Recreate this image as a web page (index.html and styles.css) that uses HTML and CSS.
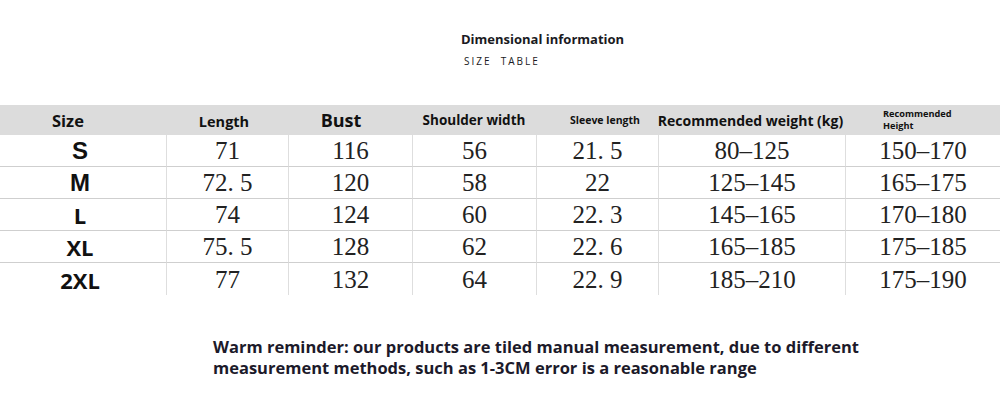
FILE: index.html
```html
<!DOCTYPE html>
<html lang="en">
<head>
<meta charset="utf-8">
<title>Size table</title>
<link rel="stylesheet" href="styles.css">
</head>
<body>
<div class="page">
  <div class="title-block">
    <div class="title">Dimensional information</div>
    <div class="subtitle">SIZE&nbsp;&nbsp;TABLE</div>
  </div>
  <div class="table">
    <div class="th th-size">Size</div>
    <div class="th th-len">Length</div>
    <div class="th th-bust">Bust</div>
    <div class="th th-sh">Shoulder width</div>
    <div class="th th-sl">Sleeve length</div>
    <div class="th th-wt">Recommended weight (kg)</div>
    <div class="th th-ht">Recommended<br>Height</div>

    <div class="td sz cond">S</div>
    <div class="td">71</div>
    <div class="td">116</div>
    <div class="td">56</div>
    <div class="td">21. 5</div>
    <div class="td">80–125</div>
    <div class="td">150–170</div>

    <div class="td sz cond">M</div>
    <div class="td">72. 5</div>
    <div class="td">120</div>
    <div class="td">58</div>
    <div class="td">22</div>
    <div class="td">125–145</div>
    <div class="td">165–175</div>

    <div class="td sz">L</div>
    <div class="td">74</div>
    <div class="td">124</div>
    <div class="td">60</div>
    <div class="td">22. 3</div>
    <div class="td">145–165</div>
    <div class="td">170–180</div>

    <div class="td sz">XL</div>
    <div class="td">75. 5</div>
    <div class="td">128</div>
    <div class="td">62</div>
    <div class="td">22. 6</div>
    <div class="td">165–185</div>
    <div class="td">175–185</div>

    <div class="td sz last">2XL</div>
    <div class="td last">77</div>
    <div class="td last">132</div>
    <div class="td last">64</div>
    <div class="td last">22. 9</div>
    <div class="td last">185–210</div>
    <div class="td last">175–190</div>
  </div>
  <div class="note">
    Warm reminder: our products are tiled manual measurement, due to different<br>
    measurement methods, such as 1-3CM error is a reasonable range
  </div>
</div>
</body>
</html>
```
FILE: styles.css
```css
html, body {
  margin: 0;
  padding: 0;
  background: #ffffff;
}

.page {
  width: 1000px;
  height: 415px;
  overflow: hidden;
  font-family: "Open Sans", "Noto Sans", sans-serif;
  color: #151515;
}

.title-block {
  padding: 30px 0 0 461px;
  height: 105px;
  box-sizing: border-box;
}

.title {
  font-size: 13px;
  font-weight: 700;
  line-height: 18px;
  color: #1a1a22;
}

.subtitle {
  margin: 6px 0 0 3px;
  font-size: 10px;
  letter-spacing: 2px;
  line-height: 14px;
  color: #1a1a22;
}

.table {
  display: grid;
  grid-template-columns: 166px 122px 124px 124px 122px 187px 155px;
  grid-template-rows: 30px repeat(5, 32px);
}

.th {
  background: #dcdcdc;
  font-weight: 700;
  display: flex;
  align-items: center;
  justify-content: center;
  color: #111;
  white-space: nowrap;
}

.th-size { font-size: 16.5px; justify-content: flex-start; padding-left: 52px; }
.th-len { font-size: 14.5px; padding-top: 2px; padding-right: 6px; }
.th-bust { font-size: 18px; padding-right: 18px; }
.th-sh { font-size: 13.5px; }
.th-sl { font-size: 10.5px; padding-left: 16px; }
.th-wt { font-size: 14px; padding-right: 2px; }
.th-ht {
  font-size: 9.2px;
  line-height: 12px;
  justify-content: flex-start;
  padding-left: 38px;
  padding-bottom: 1px;
}

.td {
  display: flex;
  align-items: center;
  justify-content: center;
  font-family: "Liberation Serif", "Times New Roman", serif;
  font-size: 25px;
  color: #222;
  border-bottom: 1px solid #cfcfcf;
  border-left: 1px solid #dedede;
  box-sizing: border-box;
  padding-top: 1px;
}

.td.sz {
  border-left: none;
  font-family: "Open Sans", "Noto Sans", sans-serif;
  font-weight: 700;
  font-size: 22px;
  color: #111;
  padding-right: 6px;
}

.td.cond {
  font-family: "Liberation Sans Narrow", "Liberation Sans", sans-serif;
  font-size: 24px;
}

.td.last {
  border-bottom: none;
}

.note {
  margin: 41px 0 0 213px;
  font-size: 16.5px;
  font-weight: 700;
  line-height: 21px;
  color: #1c1a2a;
}
```
